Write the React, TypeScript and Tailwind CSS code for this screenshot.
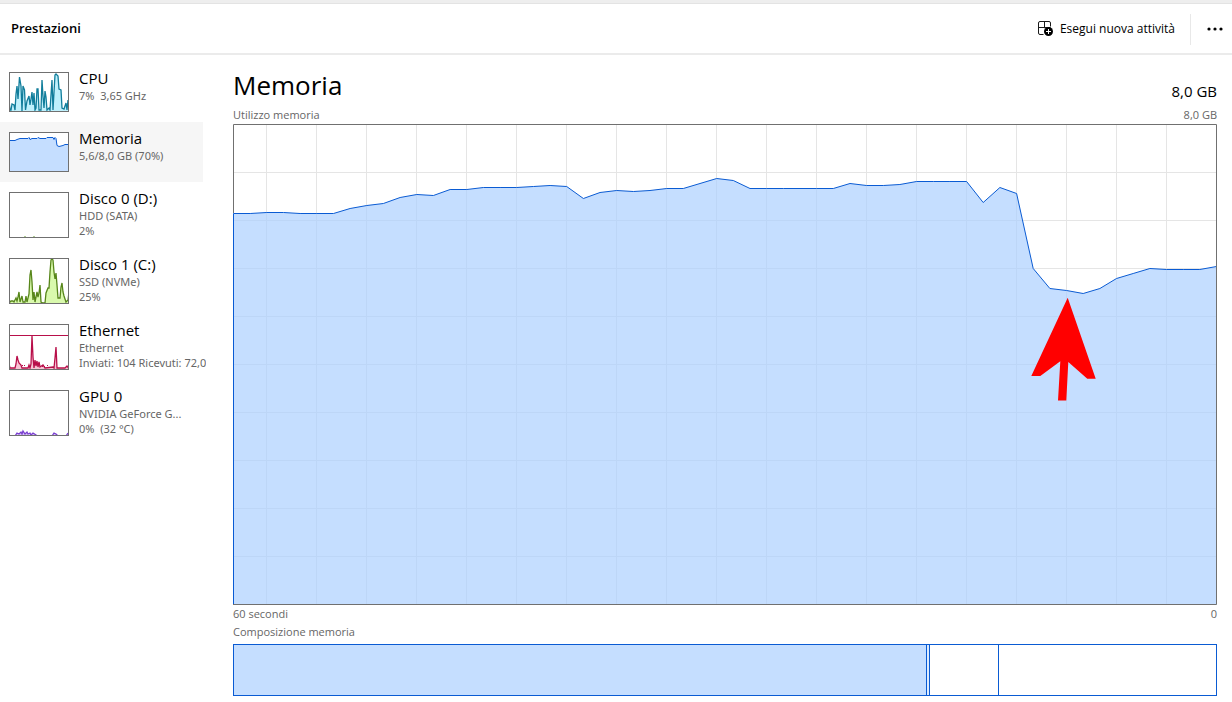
import React from 'react';

interface Resource {
  name: string;
  lines: string[];
  stroke: string;
  fill: string;
  height: number;
  points: string;
  strokeWidth?: number;
  limit?: number;
  dashed?: boolean;
  active?: boolean;
}

const RESOURCES: Resource[] = [
  {
    name: 'CPU',
    lines: ['7%  3,65 GHz'],
    stroke: '#117d9b',
    fill: '#bff0fc',
    height: 40,
    strokeWidth: 1.3,
    points:
      '0,28 1,38 2,38 3,32 5,33 6,38 7,22 8,14 9,27 10.5,5 12,14 13,39 14,14 15.5,18 16.5,38 18,29 20,24 21,33 22,27 23,20 24,33 25,21 26,38 27,36 28,17 29,17 30,38 31,38 32,38 33,8 34,24 35,36 36,19 37,25 38,38 40,36 41,38 43,8 44,38 45,20 46,3 47,2 49,4 50,17 52,18 53,36 55,37 57,31 58,38 59,28',
  },
  {
    name: 'Memoria',
    lines: ['5,6/8,0 GB (70%)'],
    stroke: '#0a5bd3',
    fill: '#c5deff',
    height: 40,
    points:
      '0,8.5 6,8.5 8,7.5 11,6.5 19,6.5 20,5.5 21,7.5 23,6.5 28,6.5 29,5.5 31,6.5 37,6.5 38,5.5 44,5.5 45,7.5 46,5.5 47,6.5 48,13.5 50,14.5 54,13.5 56,12.5 60,12.5',
    active: true,
  },
  {
    name: 'Disco 0 (D:)',
    lines: ['HDD (SATA)', '2%'],
    stroke: '#4c8a0c',
    fill: '#d9f5b0',
    height: 46,
    points: '0,46 15,46 16,44.5 17,46 24,46 25,44.5 26,46 60,46',
  },
  {
    name: 'Disco 1 (C:)',
    lines: ['SSD (NVMe)', '25%'],
    stroke: '#57861a',
    fill: '#d9f9ad',
    height: 46,
    strokeWidth: 1.3,
    points:
      '0,45 2,43 4,43 5,44 7,40 8,43 9,39 10,34 11,44 13,38 14,44 16,44 17,38 18,44 20,36 21,17 22,12 23,24 24,42 25,34 26,44 28,34 29,39 30,35 31,27 32,44 34,45 36,45 37,35 39,30 40,30 41,14 42,2 43,1 44,2 45,14 46,21 47,15 48,27 49,40 51,40 52,29 53,25 54,34 55,38 57,44 59,42 60,34',
  },
  {
    name: 'Ethernet',
    lines: ['Ethernet', 'Inviati: 104 Ricevuti: 72,0'],
    stroke: '#b80f4a',
    fill: '#f6c3d3',
    height: 46,
    strokeWidth: 1.3,
    points:
      '0,40 1,44 6,44 7,40 8,32 9,36 10,39 12,41 13,44 19,44 20,41 21,44 22,40 23,12 24,33 25,44 26,36 27,42 28,37 29,43 30,38 31,43 34,41 36,44 44,43 45,44 46,34 47,23 48,44 56,44 58,42 60,45',
    limit: 11,
    dashed: true,
  },
  {
    name: 'GPU 0',
    lines: ['NVIDIA GeForce G...', '0%  (32 °C)'],
    stroke: '#7a3fd0',
    fill: '#d9c3f6',
    height: 46,
    strokeWidth: 1.3,
    points:
      '0,46 6,46 8,43 10,44 12,42 13,44 14,41 16,44 18,42 19,44 21,43 22,45 24,43 27,45 28,46 43,46 45,43 47,44 49,46 57,46 59,43',
  },
];

// one sample per second, y measured down from the top of the graph
const SAMPLES = [
  89, 89, 88, 88, 89, 89, 89, 84, 81, 79, 73, 70, 71, 65, 65, 63, 63, 63, 62, 61,
  62, 74, 68, 66, 67, 66, 64, 64, 59, 54, 56, 64, 64, 64, 64, 64, 64, 59, 61, 61,
  60, 57, 57, 57, 57, 78, 63, 69, 144, 164, 166, 169, 164, 154, 149, 144, 145, 145, 145, 142,
];

const GRAPH_W = 984;
const GRAPH_H = 481;

const SEGMENTS = [
  { size: 692, className: 'bg-[#c5deff] border-r' },
  { size: 2, className: 'bg-[#dcebff] border-r' },
  { size: 68, className: 'border-r' },
  { size: 217, className: '' },
];

const Thumbnail: React.FC<{ resource: Resource }> = ({ resource }) => {
  const { height, points, stroke, fill, strokeWidth = 1, limit, dashed } = resource;
  return (
    <svg width="60" height={height} viewBox={`0 0 60 ${height}`} className="shrink-0 bg-white" aria-hidden="true">
      <polygon points={`0,${height} ${points} 60,${height}`} fill={fill} />
      <polyline points={points} fill="none" stroke={stroke} strokeWidth={strokeWidth} />
      {dashed && (
        <path
          d="M13 41.5h3M19 42.5h2M29 40.5h2M33 42.5h3M38 41.5h1M40 43.5h1"
          stroke={stroke}
          strokeDasharray="1 1"
        />
      )}
      {limit && <path d={`M0 ${limit}.5H60`} stroke={stroke} />}
      <rect x="0.5" y="0.5" width="59" height={height - 1} fill="none" stroke="#707070" />
    </svg>
  );
};

const ResourceItem: React.FC<{ resource: Resource }> = ({ resource }) => (
  <li>
    <button
      className={`flex w-[203px] items-start gap-[10px] py-[10px] pl-[9px] text-left ${resource.active ? 'bg-[#f6f6f6]' : ''}`}
    >
      <Thumbnail resource={resource} />
      <span className="-my-1 block whitespace-pre">
        <span className="block text-[15px] leading-[20px] text-black">{resource.name}</span>
        {resource.lines.map((line) => (
          <span key={line} className="block font-['Noto_Sans','Open_Sans',sans-serif] text-[11px] leading-[15px] text-[#666666]">
            {line}
          </span>
        ))}
      </span>
    </button>
  </li>
);

const MemoryGraph: React.FC = () => {
  const line = SAMPLES.map((y, i) => `${((i * 983) / 59 + 0.5).toFixed(1)},${y + 0.5}`).join(' ');
  const columns = Array.from({ length: 19 }, (_, i) => 33.5 + i * 50);
  const rows = Array.from({ length: 9 }, (_, i) => 48.5 + i * 48);

  return (
    <svg
      viewBox={`0 0 ${GRAPH_W} ${GRAPH_H}`}
      preserveAspectRatio="none"
      className="block h-[481px] w-full"
      role="img"
      aria-label="Utilizzo memoria"
    >
      <g stroke="#e5e5e5">
        {columns.map((x) => (
          <path key={x} d={`M${x} 0V${GRAPH_H}`} />
        ))}
        {rows.map((y) => (
          <path key={y} d={`M0 ${y}H${GRAPH_W}`} />
        ))}
      </g>
      <polygon points={`0,${GRAPH_H} ${line} ${GRAPH_W},${GRAPH_H}`} fill="#a8ceff" fillOpacity="0.67" />
      <polyline points={`0.5,${GRAPH_H - 1} ${line}`} fill="none" stroke="#0a5bd3" />
      <path d={`M.5 89V.5H${GRAPH_W - 0.5}V${GRAPH_H - 0.5}H0`} fill="none" stroke="#707070" />
      {/* marker on the drop */}
      <polygon
        points="834.7,173.7 862.7,254.7 854.3,254.7 835.3,238 833.3,276.5 825,276.5 827.3,237.3 807.3,252 798.3,252"
        fill="#ff0000"
      />
    </svg>
  );
};

const NewTaskIcon: React.FC = () => (
  <svg width="16" height="16" viewBox="0 0 16 16" fill="none" stroke="#1a1a1a" aria-hidden="true">
    <path d="M5.5 13.5H2Q.5 13.5 .5 12V2Q.5.5 2 .5H11Q12.5.5 12.5 2V5.5M.5 6.5H12.5M6.5.5V6.5" />
    <circle cx="10.5" cy="10.5" r="4.5" fill="#000" stroke="none" />
    <path d="M8 10.5H13M10.5 8V13" stroke="#fff" />
  </svg>
);

const App: React.FC = () => {
  return (
    <div className="min-h-screen bg-white font-['Open_Sans','Noto_Sans',sans-serif] text-black">
      <div className="h-1 border-b border-[#e3e3e3] bg-[#eeeeee]" />
      <header className="flex h-[51px] items-center border-b-2 border-[#ebebeb] pt-px pr-2 pl-[11px]">
        <h1 className="text-[13px] font-semibold">Prestazioni</h1>
        <button className="ml-auto flex items-center gap-1.5 text-[12px]">
          <NewTaskIcon />
          Esegui nuova attività
        </button>
        <div className="ml-[15px] h-[31px] w-px bg-[#e8e8e8]" />
        <button className="ml-4 flex h-6 items-center" aria-label="Altre opzioni">
          <svg width="17" height="4" viewBox="0 0 17 4" fill="#000">
            <circle cx="2" cy="2" r="1.6" />
            <circle cx="8" cy="2" r="1.6" />
            <circle cx="14" cy="2" r="1.6" />
          </svg>
        </button>
      </header>

      <div className="flex">
        <nav className="w-[206px] shrink-0 overflow-hidden pt-[7px]">
          <ul>
            {RESOURCES.map((resource) => (
              <ResourceItem key={resource.name} resource={resource} />
            ))}
          </ul>
        </nav>

        <main className="min-w-0 flex-1 pt-[13px] pr-[15px] pl-[27px]">
          <div className="flex items-end justify-between pb-1">
            <h2 className="text-[26px] leading-[34px]">Memoria</h2>
            <span className="text-[15px] leading-[22px]">8,0 GB</span>
          </div>
          <div className="flex justify-between text-[11px] leading-[18px] text-[#666666]">
            <span>Utilizzo memoria</span>
            <span>8,0 GB</span>
          </div>
          <MemoryGraph />
          <div className="flex justify-between text-[11px] leading-[18px] text-[#666666]">
            <span>60 secondi</span>
            <span>0</span>
          </div>
          <div className="pb-[3px] text-[11px] leading-[18px] text-[#666666]">Composizione memoria</div>
          <div className="flex h-[52px] border border-[#0a5bd3]">
            {SEGMENTS.map((segment) => (
              <div
                key={segment.size}
                className={`basis-0 border-[#0a5bd3] ${segment.className}`}
                style={{ flexGrow: segment.size }}
              />
            ))}
          </div>
        </main>
      </div>
    </div>
  );
};

export default App;
